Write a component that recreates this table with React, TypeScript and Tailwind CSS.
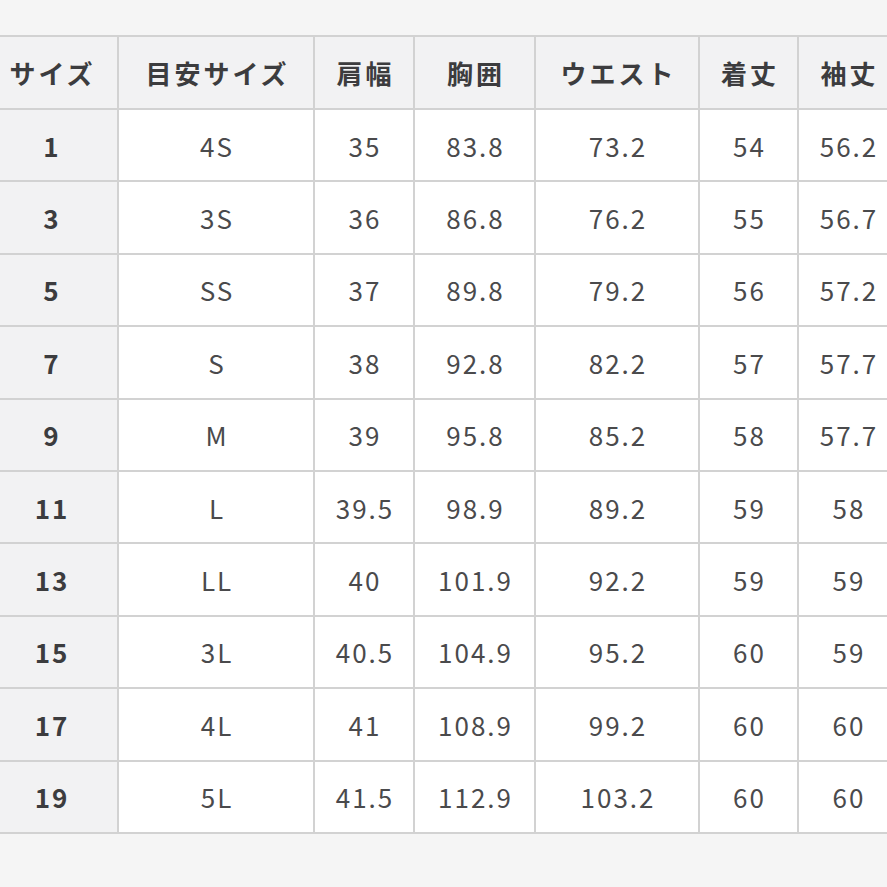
const headers = ["サイズ", "目安サイズ", "肩幅", "胸囲", "ウエスト", "着丈", "袖丈"];

const rows: string[][] = [
  ["1", "4S", "35", "83.8", "73.2", "54", "56.2"],
  ["3", "3S", "36", "86.8", "76.2", "55", "56.7"],
  ["5", "SS", "37", "89.8", "79.2", "56", "57.2"],
  ["7", "S", "38", "92.8", "82.2", "57", "57.7"],
  ["9", "M", "39", "95.8", "85.2", "58", "57.7"],
  ["11", "L", "39.5", "98.9", "89.2", "59", "58"],
  ["13", "LL", "40", "101.9", "92.2", "59", "59"],
  ["15", "3L", "40.5", "104.9", "95.2", "60", "59"],
  ["17", "4L", "41", "108.9", "99.2", "60", "60"],
  ["19", "5L", "41.5", "112.9", "103.2", "60", "60"],
];

const widths = [134, 196, 100, 121, 164, 99, 100];

export default function App() {
  return (
    <div
      className="min-h-screen w-full overflow-hidden bg-[#f5f5f5] pt-[35px]"
      style={{ fontFamily: '"Noto Sans CJK JP", "Noto Sans", sans-serif' }}
    >
      <table className="-ml-[17px] w-[914px] min-w-[914px] table-fixed border-collapse">
        <colgroup>
          {widths.map((w, i) => (
            <col key={i} style={{ width: w }} />
          ))}
        </colgroup>
        <thead>
          <tr className="h-[73px]">
            {headers.map((h) => (
              <th
                key={h}
                className="border-2 border-[#d2d2d2] bg-[#f2f2f3] pl-[3px] text-center text-[26px] font-bold tracking-[3px] text-[#3c3c3e]"
              >
                {h}
              </th>
            ))}
          </tr>
        </thead>
        <tbody>
          {rows.map((r) => (
            <tr key={r[0]} className="h-[72.4px]">
              {r.map((c, i) =>
                i === 0 ? (
                  <th
                    key={i}
                    className="border-2 border-[#d2d2d2] bg-[#f2f2f3] pl-[2px] text-center text-[26px] font-bold tracking-[2px] text-[#3c3c3e]"
                  >
                    {c}
                  </th>
                ) : (
                  <td
                    key={i}
                    className="border-2 border-[#d2d2d2] bg-white pl-[2px] text-center text-[26px] tracking-[2px] text-[#4a4a4c]"
                  >
                    {c}
                  </td>
                )
              )}
            </tr>
          ))}
        </tbody>
      </table>
    </div>
  );
}
